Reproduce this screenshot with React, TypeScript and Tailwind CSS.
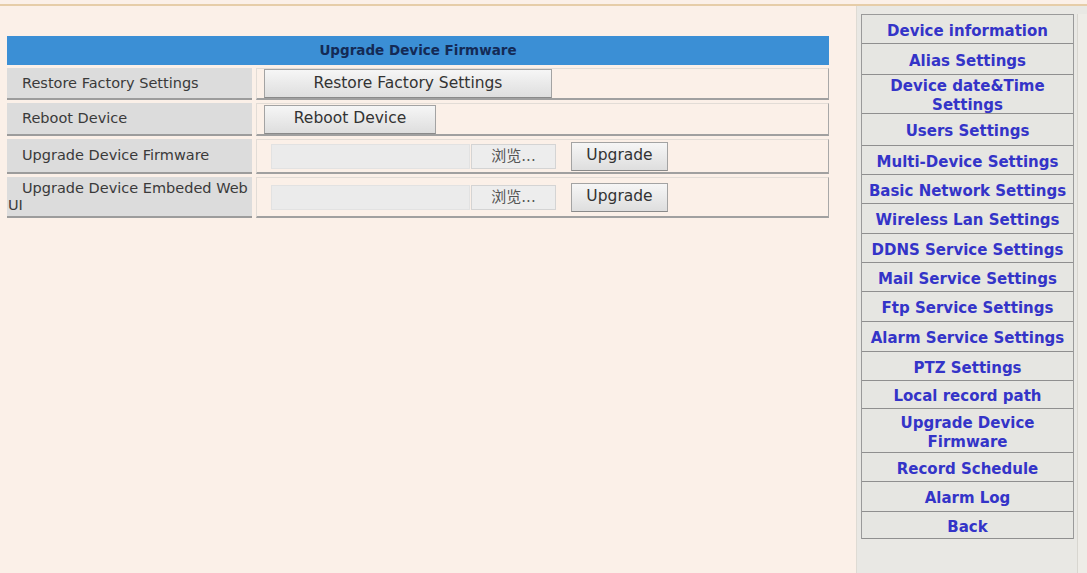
import React from 'react';

const menu: { label: string; h: string }[] = [
  { label: 'Device information', h: 'h-[29px]' },
  { label: 'Alias Settings', h: 'h-[31px]' },
  { label: 'Device date&Time Settings', h: 'h-[39px]' },
  { label: 'Users Settings', h: 'h-[32px]' },
  { label: 'Multi-Device Settings', h: 'h-[29px]' },
  { label: 'Basic Network Settings', h: 'h-[29px]' },
  { label: 'Wireless Lan Settings', h: 'h-[30px]' },
  { label: 'DDNS Service Settings', h: 'h-[29px]' },
  { label: 'Mail Service Settings', h: 'h-[29px]' },
  { label: 'Ftp Service Settings', h: 'h-[30px]' },
  { label: 'Alarm Service Settings', h: 'h-[30px]' },
  { label: 'PTZ Settings', h: 'h-[29px]' },
  { label: 'Local record path', h: 'h-[28px]' },
  { label: 'Upgrade Device Firmware', h: 'h-[44px]' },
  { label: 'Record Schedule', h: 'h-[29px]' },
  { label: 'Alarm Log', h: 'h-[30px]' },
  { label: 'Back', h: 'h-[27px]' },
];

function Button({ children, className }: { children: React.ReactNode; className: string }) {
  return (
    <button
      className={
        'flex items-center justify-center border border-[#a3a3a3] border-b-[#8a8a8a] bg-gradient-to-b from-[#f6f6f6] to-[#dedede] text-[15.5px] text-[#333] ' +
        className
      }
    >
      {children}
    </button>
  );
}

function FileField() {
  return (
    <div className="flex items-center">
      <div className="ml-[14px] h-[25px] w-[199px] border border-[#e2e2e2] bg-[#ebebeb]" />
      <div className="ml-[1px] flex h-[25px] w-[85px] items-center justify-center border border-[#d4d4d4] bg-[#ededed] text-[15px] text-[#555] font-['DejaVu_Sans','Noto_Sans_CJK_SC',sans-serif]">
        浏览...
      </div>
      <Button className="ml-[15px] h-[29px] w-[97px]">Upgrade</Button>
    </div>
  );
}

function Row({ label, h, children }: { label: React.ReactNode; h: string; children: React.ReactNode }) {
  return (
    <div className={'flex gap-[4px] ' + h}>
      <div className="flex w-[245px] shrink-0 items-center border-b-2 border-[#9c9c9c] bg-[#dcdcdc] pl-[1px] text-[14.5px] leading-[17px] text-[#3a3a3a]">
        <div className="indent-[14px] whitespace-nowrap">{label}</div>
      </div>
      <div className="flex flex-1 items-center border border-[#e2dcd6] border-b-2 border-b-[#a0a0a0] border-r-[#a8a8a8]">
        {children}
      </div>
    </div>
  );
}

export default function App() {
  return (
    <div className="flex h-[573px] w-[1087px] flex-col overflow-hidden bg-[#fbf0e8] font-['DejaVu_Sans',Verdana,sans-serif]">
      <div className="h-[4px]" />
      <div className="h-[2px] bg-[#e6cda8]" />
      <div className="flex flex-1">
        <main className="w-[856px] shrink-0 pl-[7px] pr-[27px] pt-[30px]">
          <div className="flex h-[29px] items-center justify-center bg-[#3b8fd5] text-[13.5px] font-bold text-[#142a55]">
            Upgrade Device Firmware
          </div>
          <div className="mt-[3px] flex flex-col gap-[3px]">
            <Row label="Restore Factory Settings" h="h-[32px]">
              <Button className="ml-[7px] h-[29px] w-[288px]">Restore Factory Settings</Button>
            </Row>
            <Row label="Reboot Device" h="h-[33px]">
              <Button className="ml-[7px] h-[29px] w-[172px]">Reboot Device</Button>
            </Row>
            <Row label="Upgrade Device Firmware" h="h-[35px]">
              <FileField />
            </Row>
            <Row
              label={
                <>
                  Upgrade Device Embeded Web
                  <br />
                  UI
                </>
              }
              h="h-[41px]"
            >
              <FileField />
            </Row>
          </div>
        </main>
        <aside className="flex flex-1 border-l border-[#dedbd4] bg-[#e9e8e4] pt-[8px]">
          <div className="flex-1 pl-[4px]">
            <div className="w-[213px] border border-[#9a9a9a] border-b-0">
              {menu.map((m) => (
                <div
                  key={m.label}
                  className={
                    'flex items-center justify-center border-b border-[#8f8f8f] bg-[#e6e6e2] px-[3px] pt-[4px] text-center text-[15px] font-bold leading-[19px] text-[#3434c8] ' +
                    m.h
                  }
                >
                  {m.label}
                </div>
              ))}
            </div>
          </div>
          <div className="w-[10px] border-l border-[#d8d6d0] bg-[#eeece7]" />
        </aside>
      </div>
    </div>
  );
}
